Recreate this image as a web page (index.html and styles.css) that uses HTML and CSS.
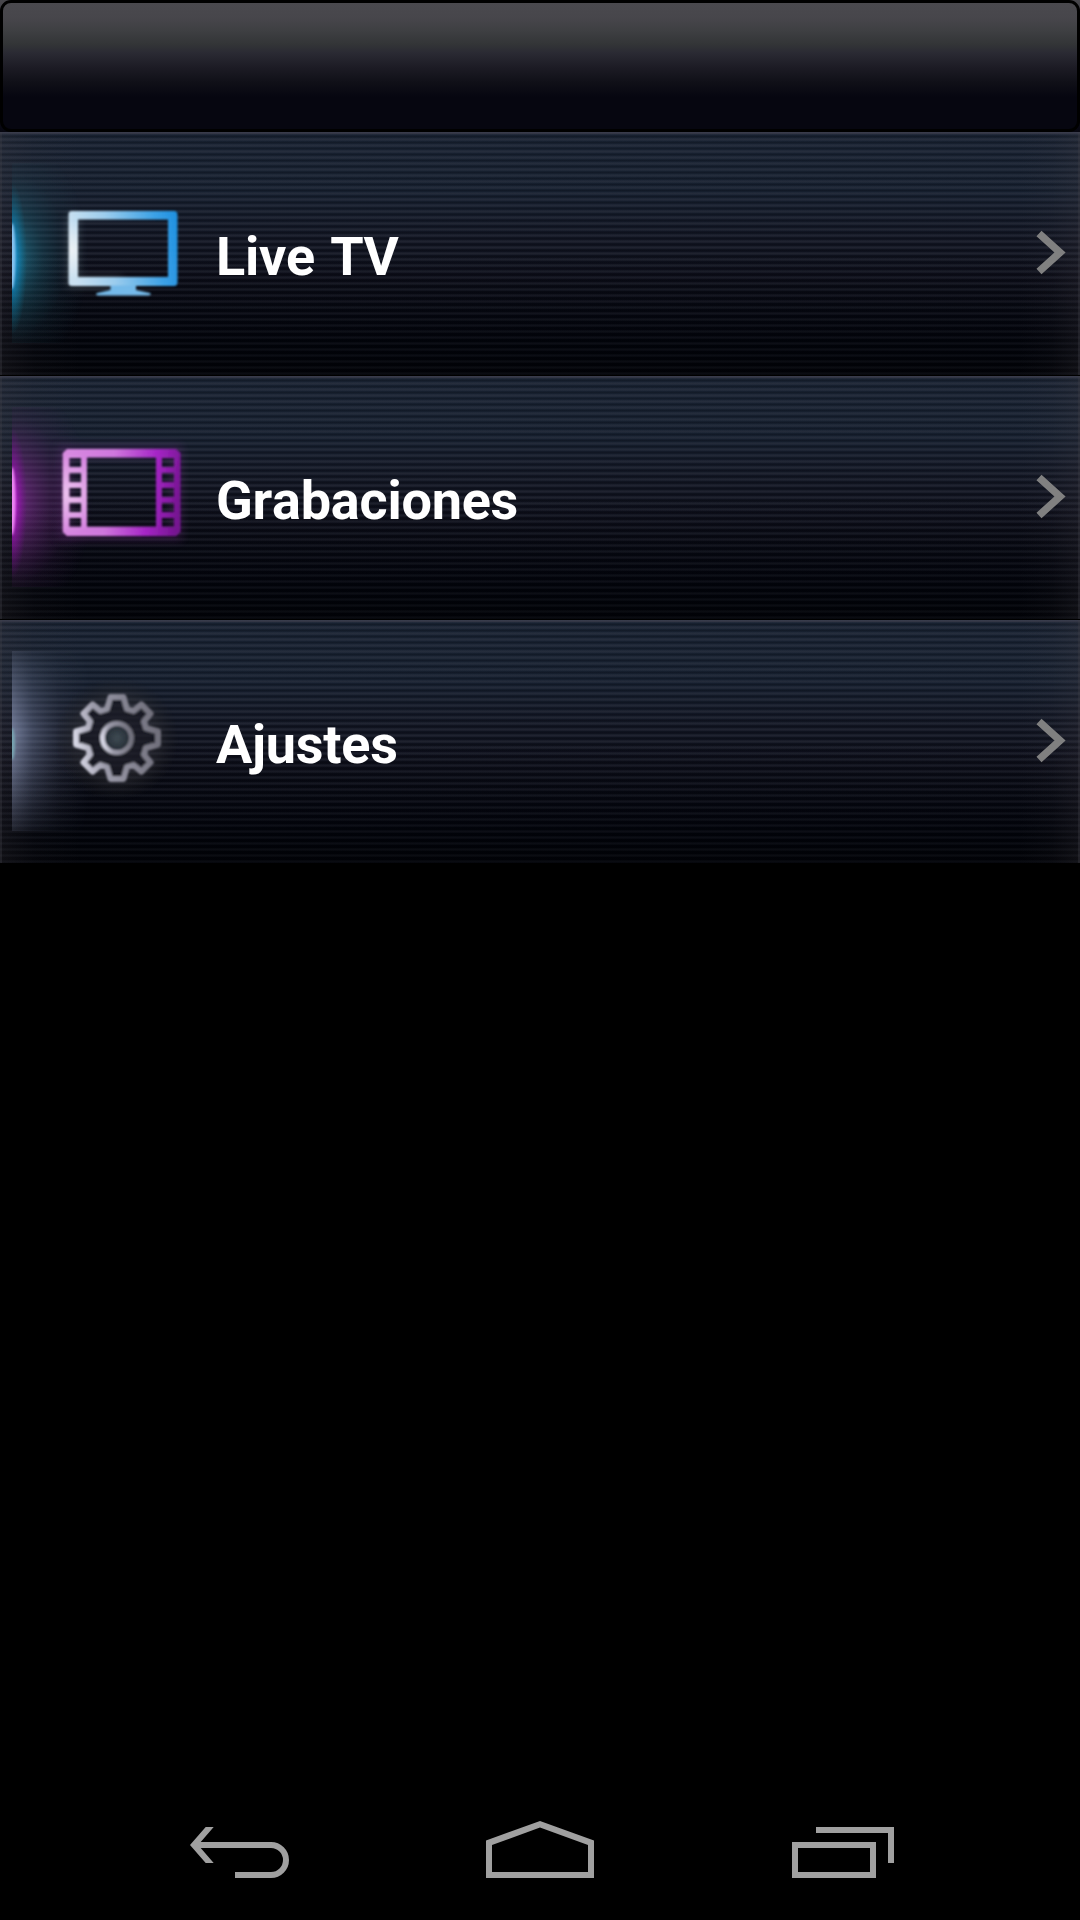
FILE: index.html
```html
<!DOCTYPE html>
<html lang="es">
<head>
<meta charset="utf-8">
<title>TV</title>
<link rel="stylesheet" href="styles.css">
</head>
<body>
<div class="screen">
  <header class="header"><div class="header-panel"></div></header>
  <main class="menu">
    <a class="row">
      <svg class="row-icon" viewBox="0 0 180 180">
        <defs>
          <linearGradient id="tv" x1="0" x2="1" y1=".3" y2=".2"><stop offset="0" stop-color="#d3eafa"/><stop offset=".35" stop-color="#a3d5f6"/><stop offset=".8" stop-color="#3fa8ef"/><stop offset="1" stop-color="#2196e8"/></linearGradient>
          <radialGradient id="tvLight" gradientUnits="userSpaceOnUse" cx="60" cy="87" r="30"><stop offset="0" stop-color="#fff" stop-opacity=".8"/><stop offset="1" stop-color="#fff" stop-opacity="0"/></radialGradient>
          <radialGradient id="tvWide"><stop offset="0" stop-color="#2596b8" stop-opacity=".65"/><stop offset=".4" stop-color="#1b7187" stop-opacity=".3"/><stop offset=".7" stop-color="#156075" stop-opacity=".09"/><stop offset="1" stop-color="#115a70" stop-opacity="0"/></radialGradient>
          <radialGradient id="tvNear"><stop offset="0" stop-color="#16a2ea"/><stop offset=".4" stop-color="#1091cf" stop-opacity=".65"/><stop offset="1" stop-color="#087998" stop-opacity="0"/></radialGradient>
          <filter id="soft" x="-30%" y="-30%" width="160%" height="160%"><feGaussianBlur stdDeviation=".9"/></filter>
          <filter id="halo" x="-30%" y="-30%" width="160%" height="160%"><feGaussianBlur stdDeviation="5"/></filter>
        </defs>
        <ellipse cx="0" cy="94" rx="78" ry="120" fill="url(#tvWide)"/>
        <ellipse cx="0" cy="96" rx="15" ry="76" fill="url(#tvNear)"/>
        <ellipse cx="0" cy="93" rx="3.5" ry="33" fill="#8bcaf8" filter="url(#soft)"/>
        <path d="M61 52V119H110" fill="none" stroke="#b5c9cf" stroke-width="10" opacity=".25" filter="url(#halo)"/>
        <g filter="url(#soft)">
          <path fill="url(#tv)" fill-rule="evenodd" d="M60 48H162Q165.500 48 165.500 52V119Q165.500 123 162 123H60Q56.500 123 56.500 120V51Q56.500 48 60 48ZM66 56.500V114H156V56.500Z"/>
          <path fill="url(#tvLight)" d="M57 57H66V114H57Z"/>
          <path d="M98.500 122.500H124V127L138 130Q140 132.500 136 132.500H87Q82.500 132.500 85 130L98.500 127Z" fill="#79c1f2"/>
        </g>
      </svg>
      <span class="row-label">Live TV</span>
      <svg class="chevron" viewBox="0 0 36 50"><path d="M7 5.500L28 24.500L7 43.500"/></svg>
    </a>
    <a class="row">
      <svg class="row-icon" viewBox="0 0 180 180">
        <defs>
          <linearGradient id="film" x1="0" x2="1" y1=".4" y2=".5"><stop offset="0" stop-color="#e08fe8"/><stop offset=".4" stop-color="#d77be5"/><stop offset=".75" stop-color="#ad27ce"/><stop offset="1" stop-color="#7a1596"/></linearGradient>
          <radialGradient id="filmLight" gradientUnits="userSpaceOnUse" cx="56" cy="87" r="40"><stop offset="0" stop-color="#fbdcfb" stop-opacity=".75"/><stop offset="1" stop-color="#fbdcfb" stop-opacity="0"/></radialGradient>
          <radialGradient id="filmWide"><stop offset="0" stop-color="#a238b8" stop-opacity=".65"/><stop offset=".45" stop-color="#7b2b8c" stop-opacity=".32"/><stop offset=".7" stop-color="#6a1d7c" stop-opacity=".1"/><stop offset="1" stop-color="#58106c" stop-opacity="0"/></radialGradient>
          <radialGradient id="filmNear"><stop offset="0" stop-color="#dc23f0"/><stop offset=".4" stop-color="#ac13c6" stop-opacity=".65"/><stop offset="1" stop-color="#7b0798" stop-opacity="0"/></radialGradient>
          <path id="filmShape" fill-rule="evenodd" d="M55 42H164L168.500 46V125L164 129H55L50.700 125V46ZM75 50.500V119.700H144V50.500ZM57.300 51V60H69V51ZM57.300 66V75H69V66ZM57.300 81V90H69V81ZM57.300 96V105H69V96ZM57.300 111V119.700H69V111ZM150 51V60H162V51ZM150 66V75H162V66ZM150 81V90H162V81ZM150 96V105H162V96ZM150 111V119.700H162V111Z"/>
        </defs>
        <ellipse cx="0" cy="94" rx="82" ry="120" fill="url(#filmWide)"/>
        <ellipse cx="0" cy="96" rx="15" ry="76" fill="url(#filmNear)"/>
        <ellipse cx="0" cy="94" rx="3.500" ry="34" fill="#f48bfb" filter="url(#soft)"/>
        <rect x="52" y="44" width="112" height="84" fill="none" stroke="#9b3db0" stroke-width="12" opacity=".22" filter="url(#halo)"/>
        <g filter="url(#soft)"><use href="#filmShape" fill="url(#film)"/><use href="#filmShape" fill="url(#filmLight)"/></g>
      </svg>
      <span class="row-label">Grabaciones</span>
      <svg class="chevron" viewBox="0 0 36 50"><path d="M7 5.500L28 24.500L7 43.500"/></svg>
    </a>
    <a class="row">
      <svg class="row-icon" viewBox="0 0 180 180">
        <defs>
          <linearGradient id="gear" x1="0" x2="1" y1=".6" y2=".4"><stop offset="0" stop-color="#dfdfed"/><stop offset=".3" stop-color="#a09fae"/><stop offset="1" stop-color="#74737f"/></linearGradient>
          <linearGradient id="gearWide"><stop offset="0" stop-color="#a3b0d6" stop-opacity=".68"/><stop offset=".25" stop-color="#8797bd" stop-opacity=".4"/><stop offset=".6" stop-color="#7684a5" stop-opacity=".15"/><stop offset="1" stop-color="#68748e" stop-opacity="0"/></linearGradient>
          <linearGradient id="gearFade" x2="0" y2="1"><stop offset="0" stop-color="#fff" stop-opacity=".2"/><stop offset=".45" stop-color="#fff"/><stop offset=".65" stop-color="#fff" stop-opacity=".8"/><stop offset="1" stop-color="#fff" stop-opacity=".2"/></linearGradient>
          <mask id="gearMask"><rect width="180" height="180" fill="url(#gearFade)"/></mask>
          <radialGradient id="gearDisc"><stop offset="0" stop-color="#414d56"/><stop offset="1" stop-color="#222a32"/></radialGradient>
          <radialGradient id="gearHalo"><stop offset=".25" stop-color="#45454b" stop-opacity=".5"/><stop offset=".7" stop-color="#303034" stop-opacity=".45"/><stop offset="1" stop-color="#222" stop-opacity="0"/></radialGradient>
        </defs>
        <rect width="80" height="180" fill="url(#gearWide)" mask="url(#gearMask)"/>
        <ellipse cx="0" cy="93" rx="3" ry="16" fill="#7ba8b5" filter="url(#soft)"/>
        <circle cx="105" cy="88" r="62" fill="url(#gearHalo)"/>
        <g transform="translate(105 87)" filter="url(#soft)" fill="none" stroke="url(#gear)">
          <path stroke-width="6" stroke-linejoin="round" fill="#11151b" fill-opacity=".6" d="M-10 -29L-6.500 -41H6.500L10 -29L16.500 -27L24.400 -33.600L33.600 -24.400L27 -16.500L29 -10L41 -6.500V6.500L29 10L27 16.500L33.600 24.400L24.400 33.600L16.500 27L10 29L6.500 41H-6.500L-10 29L-16.500 27L-24.400 33.600L-33.600 24.400L-27 16.500L-29 10L-41 6.500V-6.500L-29 -10L-27 -16.500L-33.600 -24.400L-24.400 -33.600L-16.500 -27Z"/>
          <circle r="14.500" stroke-width="5" fill="url(#gearDisc)"/>
        </g>
      </svg>
      <span class="row-label">Ajustes</span>
      <svg class="chevron" viewBox="0 0 36 50"><path d="M7 5.500L28 24.500L7 43.500"/></svg>
    </a>
  </main>
  <nav class="navbar">
    <svg class="nav-icon" viewBox="0 0 144 144"><path class="solid" d="M22 69L37.700 51H45.700L31 68V70L45.700 87H37.700Z"/><path d="M28 69H103a15 15 0 0 1 0 30H67"/></svg>
    <svg class="nav-icon" viewBox="0 0 144 144"><path class="solid" fill-rule="evenodd" d="M18 64.500L72 45L126 64.500V102H18ZM24 69V96H120V69L72 51.500Z"/></svg>
    <svg class="nav-icon" viewBox="0 0 144 144"><path d="M27 69H105V99H27ZM48 54H123V87"/></svg>
  </nav>
</div>
</body>
</html>
```
FILE: styles.css
```css
* { box-sizing: border-box; }

body {
  margin: 0;
  background: #000;
  font-family: Roboto, "Liberation Sans", sans-serif;
}

.screen {
  display: flex;
  flex-direction: column;
  width: 1080px;
  height: 1920px;
}

.header {
  height: 132px;
  background: linear-gradient(#48474c, #060610);
}

.header-panel {
  height: 132px;
  border: 3px solid #000;
  border-radius: 11px;
  background: linear-gradient(#4a494e 0, #47464b 15px, #3e3f42 28px, #333537 41px, #2a2a33 50px, #1c1b24 65px, #101018 79px, #060610 94px, #060610 100%);
}

.menu {
  display: flex;
  flex-direction: column;
  gap: 1px;
}

.row {
  display: flex;
  align-items: center;
  height: 243px;
  padding: 0 10px 1px;
  border: solid rgba(62, 63, 72, .35);
  border-width: 0 2px;
  color: #fff;
  background:
    linear-gradient(#3b3e4e, #303342) 0 0 / 100% 2px no-repeat,
    linear-gradient(90deg, rgba(70, 65, 72, .2), rgba(70, 65, 72, .06) 35px, transparent 80px calc(100% - 60px), rgba(70, 65, 72, .06) calc(100% - 28px), rgba(70, 65, 72, .2)),
    linear-gradient(transparent 120px, rgba(1, 2, 8, .4) 200px, rgba(1, 2, 6, .55)),
    repeating-linear-gradient(rgba(62, 65, 78, .2) 0 1px, rgba(62, 65, 78, .32) 1px 2px, rgba(62, 65, 78, .2) 2px 3px, rgba(0, 0, 6, .1) 3px 4px, rgba(0, 0, 6, .24) 4px 5px, rgba(0, 0, 6, .1) 5px 6px),
    linear-gradient(#1a2434 0, #172131 60px, #121623 105px, #0d0f1a 145px, #070912 185px, #02050c 215px, #020308 100%);
  background-origin: border-box;
}

.row-icon {
  width: 180px;
  height: 180px;
  opacity: .96;
}

.row-label {
  flex: 1;
  margin-left: 24px;
  padding-top: 7px;
  font-size: 54px;
  font-weight: 700;
  line-height: 63px;
  font-kerning: none;
  letter-spacing: -.25px;
  word-spacing: 2px;
}

.chevron {
  width: 36px;
  height: 50px;
  fill: none;
  stroke: #808080;
  stroke-width: 7.5px;
}

.navbar {
  display: flex;
  justify-content: space-around;
  height: 144px;
  margin-top: auto;
  padding: 0 90px;
}

.nav-icon {
  width: 144px;
  height: 144px;
  fill: none;
  stroke: #a0a0a0;
  stroke-width: 6px;
}

.solid {
  fill: #a0a0a0;
  stroke: none;
}
```
